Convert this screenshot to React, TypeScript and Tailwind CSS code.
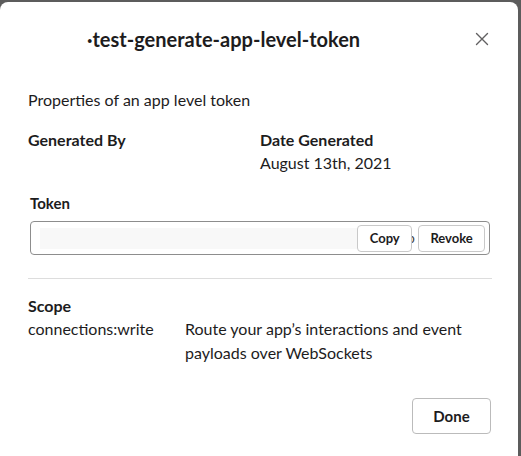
import React from "react";

export default function App() {
  return (
    <div className="w-[521px] h-[456px] overflow-hidden bg-[#5c5c5c] pt-[2px]" style={{ fontFamily: "Lato, 'Noto Sans', sans-serif" }}>
      <div className="w-[518px] h-[470px] bg-white rounded-t-[8px] text-[#1d1c1d] relative">
        {/* header */}
        <div className="flex items-center pt-[23px] h-[51px]">
          <div className="pl-[87px] text-[20px] leading-[28px] font-bold text-[#1d1c1d]">·test-generate-app-level-token</div>
          <div className="ml-auto mr-[28px] w-[16px] h-[16px] flex items-center justify-center">
            <svg width="14" height="14" viewBox="0 0 14 14" fill="none" stroke="#616061" strokeWidth="1.4" strokeLinecap="round">
              <path d="M1.5 1.5L12.5 12.5M12.5 1.5L1.5 12.5" />
            </svg>
          </div>
        </div>

        <div className="mt-[36px] pl-[28px] text-[16px] leading-[22px]">Properties of an app level token</div>

        <div className="mt-[18px] pl-[28px] flex text-[16px]">
          <div className="w-[232px] font-bold leading-[22px]">Generated By</div>
          <div className="flex flex-col">
            <div className="font-bold leading-[22px]">Date Generated</div>
            <div className="leading-[23px]">August 13th, 2021</div>
          </div>
        </div>

        <div className="mt-[19px] pl-[30px] text-[15px] font-bold leading-[20px]">Token</div>
        <div className="mt-[8px] ml-[30px] w-[460px] h-[34px] border border-[#8d8d8d] rounded-[4px] flex items-center pl-[9px] pr-[4px] relative overflow-hidden">
          <div className="w-[318px] h-[21px] bg-[#f8f8f8]"></div>
          <div className="absolute left-[376px] top-[7px] text-[14px] leading-[18px] text-[#444]">b</div>
          <button className="relative w-[55px] h-[27px] border border-[#c9c9c9] rounded-[4px] bg-white text-[13px] font-bold leading-[25px] text-[#1d1c1d]">Copy</button>
          <button className="relative ml-[6px] w-[67px] h-[27px] border border-[#c9c9c9] rounded-[4px] bg-white text-[13px] font-bold leading-[25px] text-[#1d1c1d]">Revoke</button>
        </div>

        <div className="mt-[23px] ml-[28px] w-[464px] h-px bg-[#dddddd]"></div>

        <div className="mt-[16px] pl-[28px] text-[16px] font-bold leading-[22px]">Scope</div>
        <div className="pl-[28px] flex text-[16px] leading-[24px]">
          <div className="w-[157px]">connections:write</div>
          <div className="w-[300px]">Route your app’s interactions and event payloads over WebSockets</div>
        </div>

        <div className="mt-[33px] flex justify-end pr-[27px]">
          <button className="w-[79px] h-[36px] border border-[#bbbbbb] rounded-[4px] bg-white text-[15px] font-bold text-[#1d1c1d]">Done</button>
        </div>
      </div>
    </div>
  );
}
